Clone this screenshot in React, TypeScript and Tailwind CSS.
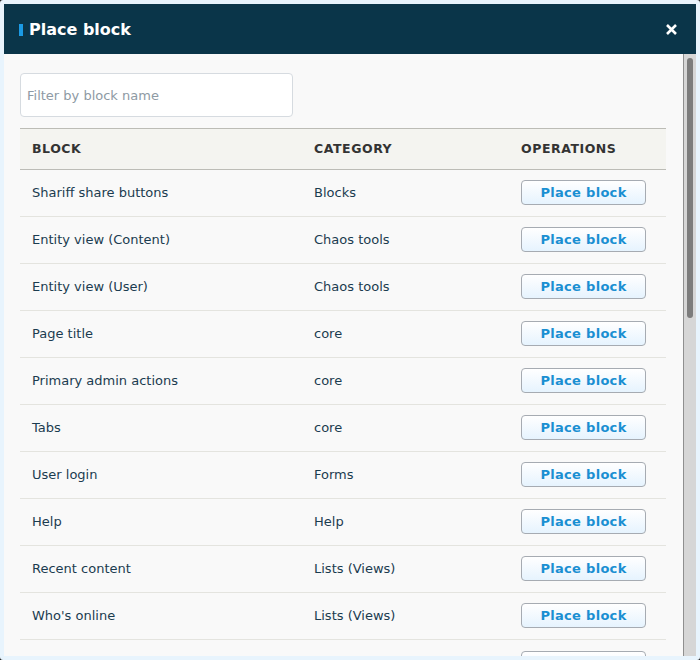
import React from "react";

const rows: [string, string][] = [
  ["Shariff share buttons", "Blocks"],
  ["Entity view (Content)", "Chaos tools"],
  ["Entity view (User)", "Chaos tools"],
  ["Page title", "core"],
  ["Primary admin actions", "core"],
  ["Tabs", "core"],
  ["User login", "Forms"],
  ["Help", "Help"],
  ["Recent content", "Lists (Views)"],
  ["Who's online", "Lists (Views)"],
];

export default function App() {
  return (
    <div className="w-[700px] h-[660px] bg-[#1a1a1a] overflow-hidden" style={{ fontFamily: '"DejaVu Sans", Verdana, sans-serif' }}>
      <div className="w-[700px] h-[660px] border-4 border-[#e8f4fd] rounded-[3px] flex flex-col overflow-hidden">
        <div className="h-[50px] shrink-0 bg-[#0a3549] flex items-center pl-[15px] pr-[18px]">
          <span className="w-[4px] h-[12px] bg-[#1b9ae4] mr-[6px] mt-[1px]" />
          <h1 className="text-white font-bold text-[16px] leading-none mt-[2px]">Place block</h1>
          <div className="flex-1" />
          <svg width="13" height="13" viewBox="0 0 13 13">
            <path d="M2 2 L11 11 M11 2 L2 11" stroke="#ffffff" strokeWidth="2.6" strokeLinecap="butt" />
          </svg>
        </div>
        <div className="flex-1 flex bg-[#f9f9f9] min-h-0">
          <div className="flex-1 overflow-hidden pl-[16px] pr-[17px] pt-[19px]">
            <div className="w-[273px] h-[44px] bg-white border border-[#d6dbe0] rounded-[4px] flex items-center px-[6px]">
              <span className="text-[13px] text-[#8e9aa4] mt-[2px]">Filter by block name</span>
            </div>
            <table className="mt-[11px] w-[646px] border-collapse table-fixed">
              <colgroup>
                <col className="w-[282px]" />
                <col className="w-[207px]" />
                <col className="w-[157px]" />
              </colgroup>
              <thead>
                <tr className="h-[41px] bg-[#f4f4f0] border-t border-b border-[#bcbcb6]">
                  <th className="text-left pl-[12px] text-[12.5px] font-bold tracking-[0.55px] text-[#333333]">BLOCK</th>
                  <th className="text-left pl-[12px] text-[12.5px] font-bold tracking-[0.55px] text-[#333333]">CATEGORY</th>
                  <th className="text-left pl-[12px] text-[12.5px] font-bold tracking-[0.55px] text-[#333333]">OPERATIONS</th>
                </tr>
              </thead>
              <tbody>
                {rows.map(([name, cat]) => (
                  <tr key={name} className="h-[47px] border-b border-[#e4e4df]">
                    <td className="pl-[12px] text-[13px] text-[#1b3c50]">{name}</td>
                    <td className="pl-[12px] text-[13px] text-[#1b3c50]">{cat}</td>
                    <td className="pl-[12px] align-middle">
                      <button className="block mb-[2px] w-[125px] h-[25px] rounded-[4px] border border-[#a6abb2] bg-gradient-to-b from-white to-[#e6f3fe] text-[#1a8fd2] font-bold text-[13px] tracking-[0.3px] leading-none">
                        Place block
                      </button>
                    </td>
                  </tr>
                ))}
                <tr className="h-[47px]">
                  <td />
                  <td />
                  <td className="pl-[12px] align-top pt-[11px]">
                    <div className="w-[125px] h-[25px] rounded-[4px] border border-[#a6abb2] bg-gradient-to-b from-white to-[#e6f3fe]" />
                  </td>
                </tr>
              </tbody>
            </table>
          </div>
          <div className="w-[13px] shrink-0 bg-[#d6d6d6] border-l border-[#8f8f8f] pt-[4px] flex justify-center">
            <div className="w-[6px] h-[260px] bg-[#7c7c7c] rounded-[3px]" />
          </div>
        </div>
      </div>
    </div>
  );
}
